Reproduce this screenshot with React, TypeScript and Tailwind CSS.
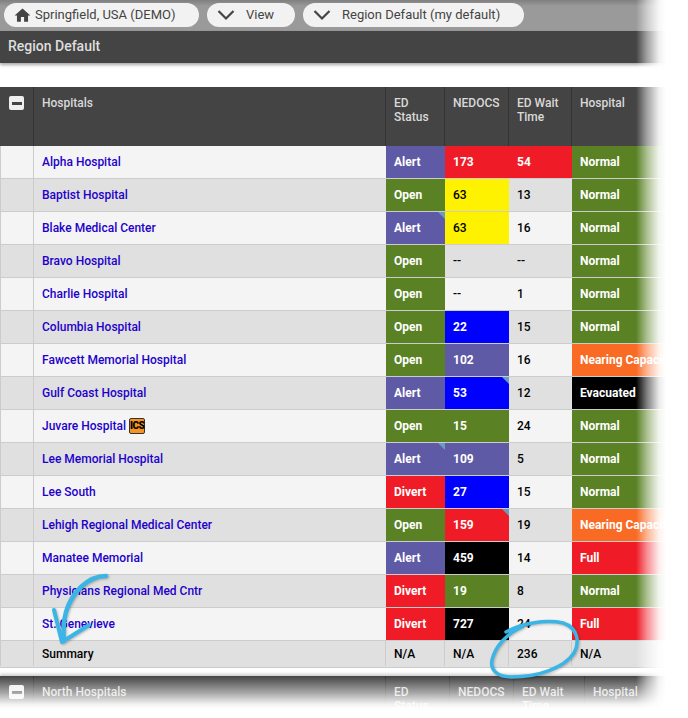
import React from 'react'

type Cell = { text: string; color?: string; corner?: boolean }

const purple = 'bg-[#5f5aa6] text-white font-bold'
const green = 'bg-[#5a8225] text-white font-bold'
const red = 'bg-[#ef1c27] text-white font-bold'
const yellow = 'bg-[#fff200] text-black font-medium'
const blue = 'bg-[#0000ff] text-white font-bold'
const orange = 'bg-[#f96a24] text-white font-bold'
const black = 'bg-black text-white font-bold'

const rows: { name: string; ics?: boolean; cells: Cell[] }[] = [
  { name: 'Alpha Hospital', cells: [{ text: 'Alert', color: purple }, { text: '173', color: red }, { text: '54', color: red }, { text: 'Normal', color: green }] },
  { name: 'Baptist Hospital', cells: [{ text: 'Open', color: green }, { text: '63', color: yellow }, { text: '13' }, { text: 'Normal', color: green }] },
  { name: 'Blake Medical Center', cells: [{ text: 'Alert', color: purple, corner: true }, { text: '63', color: yellow }, { text: '16' }, { text: 'Normal', color: green }] },
  { name: 'Bravo Hospital', cells: [{ text: 'Open', color: green }, { text: '--' }, { text: '--' }, { text: 'Normal', color: green }] },
  { name: 'Charlie Hospital', cells: [{ text: 'Open', color: green }, { text: '--' }, { text: '1' }, { text: 'Normal', color: green }] },
  { name: 'Columbia Hospital', cells: [{ text: 'Open', color: green }, { text: '22', color: blue }, { text: '15' }, { text: 'Normal', color: green }] },
  { name: 'Fawcett Memorial Hospital', cells: [{ text: 'Open', color: green }, { text: '102', color: purple }, { text: '16' }, { text: 'Nearing Capacity', color: orange }] },
  { name: 'Gulf Coast Hospital', cells: [{ text: 'Alert', color: purple }, { text: '53', color: blue, corner: true }, { text: '12' }, { text: 'Evacuated', color: black }] },
  { name: 'Juvare Hospital', ics: true, cells: [{ text: 'Open', color: green }, { text: '15', color: green }, { text: '24' }, { text: 'Normal', color: green }] },
  { name: 'Lee Memorial Hospital', cells: [{ text: 'Alert', color: purple, corner: true }, { text: '109', color: purple }, { text: '5' }, { text: 'Normal', color: green }] },
  { name: 'Lee South', cells: [{ text: 'Divert', color: red }, { text: '27', color: blue }, { text: '15' }, { text: 'Normal', color: green }] },
  { name: 'Lehigh Regional Medical Center', cells: [{ text: 'Open', color: green }, { text: '159', color: red, corner: true }, { text: '19' }, { text: 'Nearing Capacity', color: orange }] },
  { name: 'Manatee Memorial', cells: [{ text: 'Alert', color: purple }, { text: '459', color: black }, { text: '14' }, { text: 'Full', color: red }] },
  { name: 'Physicians Regional Med Cntr', cells: [{ text: 'Divert', color: red }, { text: '19', color: green }, { text: '8' }, { text: 'Normal', color: green }] },
  { name: 'St. Genevieve', cells: [{ text: 'Divert', color: red }, { text: '727', color: black }, { text: '24' }, { text: 'Full', color: red }] },
]

function Chevron() {
  return (
    <svg width="18" height="12" viewBox="0 0 18 12" fill="none" stroke="#444" strokeWidth="2.2">
      <path d="M1.5 2l7.5 7.5L16.5 2" />
    </svg>
  )
}

function MinusBox() {
  return (
    <span className="flex h-[14px] w-[15px] items-center justify-center rounded-[2px] bg-[#efefef]">
      <span className="h-[3px] w-[10px] bg-[#444]" />
    </span>
  )
}

function HeaderRow({ widths, labels, title }: { widths: number[]; labels: string[]; title: string }) {
  return (
    <div className="flex h-[59px] shrink-0 bg-[#444] text-[12px] font-medium leading-[14px] text-[#d9d9d9]">
      <div className="flex w-[34px] shrink-0 justify-center border-r border-[#333] pt-[9px]">
        <MinusBox />
      </div>
      <div className="w-[351px] shrink-0 pl-2 pt-[9px]">{title}</div>
      {labels.map((label, i) => (
        <div
          key={label}
          style={{ width: widths[i] }}
          className="shrink-0 border-l border-[#333] pl-2 pr-2 pt-[9px]"
        >
          {label}
        </div>
      ))}
    </div>
  )
}

export default function App(): React.ReactElement {
  return (
    <div className="relative h-[718px] w-[688px] overflow-hidden bg-white font-['Roboto',sans-serif]">
      <div className="flex h-[31px] items-center gap-2 bg-gradient-to-b from-[#808080] from-0% to-[#9a9a9a] to-20% pb-[1px] pl-1 text-[13px] text-[#444]">
        <div className="flex h-6 w-[195px] items-center gap-[3px] rounded-full bg-[#f2f2f2] pl-[9px]">
          <svg width="19" height="19" viewBox="0 0 24 24" fill="#444">
            <path d="M10 20v-6h4v6h5v-8h3L12 3 2 12h3v8z" />
          </svg>
          <span>Springfield, USA (DEMO)</span>
        </div>
        <div className="flex h-6 w-[88px] items-center gap-[11px] rounded-full bg-[#f2f2f2] pl-[10px]">
          <Chevron />
          <span>View</span>
        </div>
        <div className="flex h-6 w-[221px] items-center gap-[11px] rounded-full bg-[#f2f2f2] pl-[10px]">
          <Chevron />
          <span>Region Default (my default)</span>
        </div>
      </div>

      <div className="flex h-8 items-center bg-[#444] pb-[2px] pl-2 text-[14px] font-medium text-[#dedede] shadow-[0_2px_3px_rgba(0,0,0,0.35)]">
        Region Default
      </div>

      <div className="mt-6 flex flex-col">
        <HeaderRow
          title="Hospitals"
          widths={[59, 64, 63, 120]}
          labels={['ED Status', 'NEDOCS', 'ED Wait Time', 'Hospital']}
        />

        {rows.map((row, index) => (
          <div
            key={row.name}
            className={`flex h-[33px] border-b border-[#ccc] text-[12px] ${index % 2 === 0 ? 'bg-[#f4f4f4]' : 'bg-[#e0e0e0]'}`}
          >
            <div className="w-[34px] shrink-0 border-x border-[#ccc]" />
            <div className="flex w-[352px] shrink-0 items-center gap-[3px] pl-2 font-medium text-[#2200cc]">
              {row.name}
              {row.ics && (
                <span className="flex h-4 w-[16px] items-center justify-center rounded-[2px] border border-[#333] bg-[#f7941d] text-[10px] font-black leading-none tracking-[-0.6px] text-black">
                  ICS
                </span>
              )}
            </div>
            {row.cells.map((cell, i) => (
              <div
                key={i}
                className={`relative flex shrink-0 items-center overflow-hidden whitespace-nowrap pl-2 ${i === 0 ? 'w-[59px]' : i === 1 ? 'w-[64px]' : i === 2 ? 'w-[63px]' : 'w-[120px]'} ${cell.color ?? 'font-medium text-black'}`}
              >
                {cell.text}
                {cell.corner && (
                  <span className="absolute right-0 top-0 border-l-[7px] border-t-[7px] border-l-transparent border-t-[#6a9bc3]" />
                )}
              </div>
            ))}
          </div>
        ))}

        <div className="flex h-[27px] border-b border-[#ccc] bg-[#e0e0e0] pb-[1px] text-[12px] font-medium text-black">
          <div className="w-[34px] shrink-0 border-x border-[#ccc]" />
          <div className="flex w-[352px] shrink-0 items-center border-r border-[#ccc] pl-2">Summary</div>
          <div className="flex w-[59px] shrink-0 items-center border-r border-[#ccc] pl-2">N/A</div>
          <div className="flex w-[64px] shrink-0 items-center border-r border-[#ccc] pl-2">N/A</div>
          <div className="flex w-[63px] shrink-0 items-center border-r border-[#ccc] pl-2">236</div>
          <div className="flex w-[120px] shrink-0 items-center pl-2">N/A</div>
        </div>
      </div>

      <div className="mt-2 shadow-[0_-2px_3px_rgba(0,0,0,0.2)]">
        <HeaderRow
          title="North Hospitals"
          widths={[64, 64, 71, 120]}
          labels={['ED Status', 'NEDOCS', 'ED Wait Time', 'Hospital']}
        />
      </div>

      {/* torn-paper fades over the right and bottom edges */}
      <div className="absolute inset-x-0 top-[676px] h-[42px] bg-[linear-gradient(to_bottom,rgba(255,255,255,0)_0,rgba(255,255,255,0.5)_16px,rgba(255,255,255,0.92)_28px,#fff_33px)]" />
      <div className="absolute inset-y-0 left-[636px] right-0 bg-[linear-gradient(to_right,rgba(255,255,255,0)_0,rgba(255,255,255,0.5)_11px,rgba(255,255,255,0.92)_23px,#fff_30px)]" />

      {/* hand drawn annotations */}
      <svg className="absolute left-0 top-0 drop-shadow-[1px_1px_1px_rgba(0,0,0,0.25)]" width="688" height="718" fill="none" stroke="#3bb5e6" strokeLinecap="round" strokeLinejoin="round">
        <path strokeWidth="4.5" d="M106 576C88 576 72 592 66 612C63 623 63 632 64 641" />
        <path strokeWidth="4" d="M54 610L62 642L89 625" />
        <path strokeWidth="3.5" d="M506 632C520 624 545 619 563 623C578 628 580 642 574 653C564 668 538 677 512 677C497 677 490 670 492 660C495 647 506 634 522 627" />
      </svg>
    </div>
  )
}
